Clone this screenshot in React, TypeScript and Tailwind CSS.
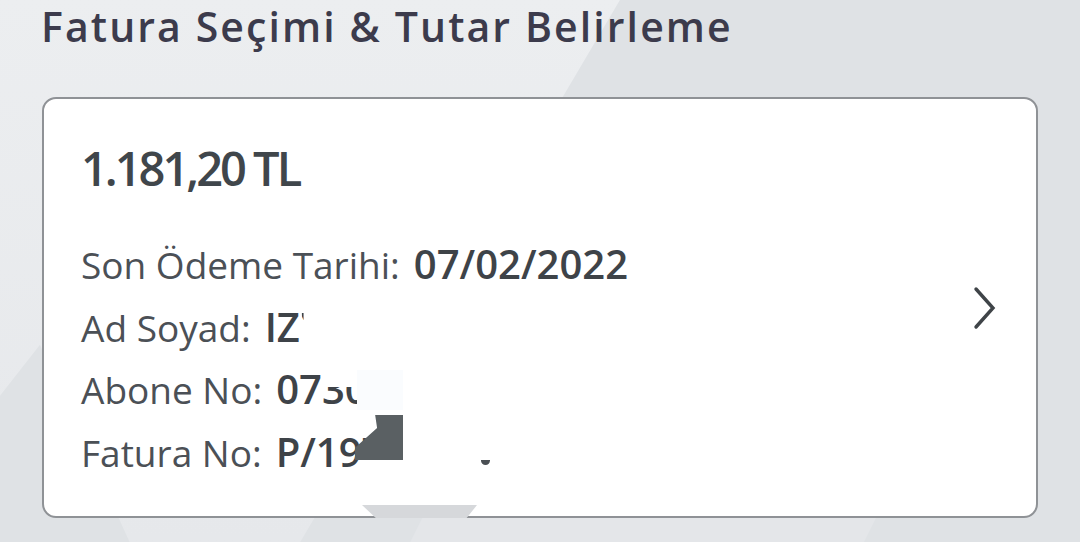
import React from "react";

function Row({ label, children }: { label: string; children: React.ReactNode }) {
  return (
    <div className="flex items-baseline whitespace-nowrap h-[62.5px] leading-[62.5px]">
      <span className="text-[37px] text-[#4b5056]">{label}</span>
      <span className="ml-[14px] text-[40px] font-semibold text-[#3e4348]">{children}</span>
    </div>
  );
}

export default function App() {
  return (
    <div
      className="relative w-[1080px] h-[542px] overflow-hidden bg-[#dfe2e5]"
      style={{ fontFamily: '"Open Sans", "Noto Sans", sans-serif' }}
    >
      {/* background light streaks */}
      <div className="absolute inset-0 bg-gradient-to-b from-[#eceef0] to-[#e6e8eb] [clip-path:polygon(0_0,57.4%_0,27.8%_100%,12%_100%,3.7%_63.6%,0_73%)]" />
      <div className="absolute inset-0 bg-[#e4e6e9] [clip-path:polygon(40%_92%,82%_92%,80%_100%,38%_100%)]" />

      <div className="relative flex flex-col pl-[41px]">
        <h1 className="pt-[6px] h-[97px] text-[41px] leading-[41px] font-semibold text-[#3c3b4c] tracking-[2.1px] whitespace-nowrap">
          Fatura Seçimi &amp; Tutar Belirleme
        </h1>

        <div className="relative ml-[1px] w-[996px] h-[421px] rounded-[14px] border-2 border-[#8f9296] bg-white flex items-start">
          <div className="flex-1 flex flex-col pl-[37px] pt-[46px]">
            <div className="text-[47px] leading-[47px] font-semibold text-[#40464b] tracking-[-3px]">
              1.181,20 TL
            </div>
            <div className="mt-[41px] flex flex-col">
              <Row label="Son Ödeme Tarihi:">07/02/2022</Row>
              <Row label="Ad Soyad:">
                IZ
                <span className="inline-block [clip-path:inset(0_20px_38px_2px)]">Y</span>
              </Row>
              <Row label="Abone No:">
                07
                <span className="inline-block [clip-path:inset(29px_0_0_0)]">30</span>
              </Row>
              <Row label="Fatura No:">
                P/19
                <span className="inline-block [clip-path:inset(0_0_24px_0)]">7</span>
              </Row>
            </div>
          </div>
          <svg className="self-center mr-[38px]" width="26" height="46" viewBox="0 0 26 46" fill="none">
            <path d="M4 4 L21 23 L4 42" stroke="#3f4448" strokeWidth="3.4" strokeLinecap="round" strokeLinejoin="miter" />
          </svg>

          {/* redaction overlays */}
          <div className="absolute left-[313px] top-[271px] w-[46px] h-[40px] bg-[#fafcfe]" />
          <div className="absolute left-[311px] top-[316px] w-[48px] h-[45px] bg-[#5a6063] [clip-path:polygon(42%_0,100%_0,100%_100%,0_100%,0_73%,46%_29%)]" />
          <div className="absolute left-[437px] top-[361px] w-[9px] h-[5px] rounded-b-full bg-[#4a4f54]" />
          <div className="absolute left-[318px] bottom-[-2px] w-[115px] h-[13px] bg-[#d6d8db] [clip-path:polygon(0_0,100%_0,91%_100%,12%_100%)]" />
        </div>
      </div>
    </div>
  );
}
